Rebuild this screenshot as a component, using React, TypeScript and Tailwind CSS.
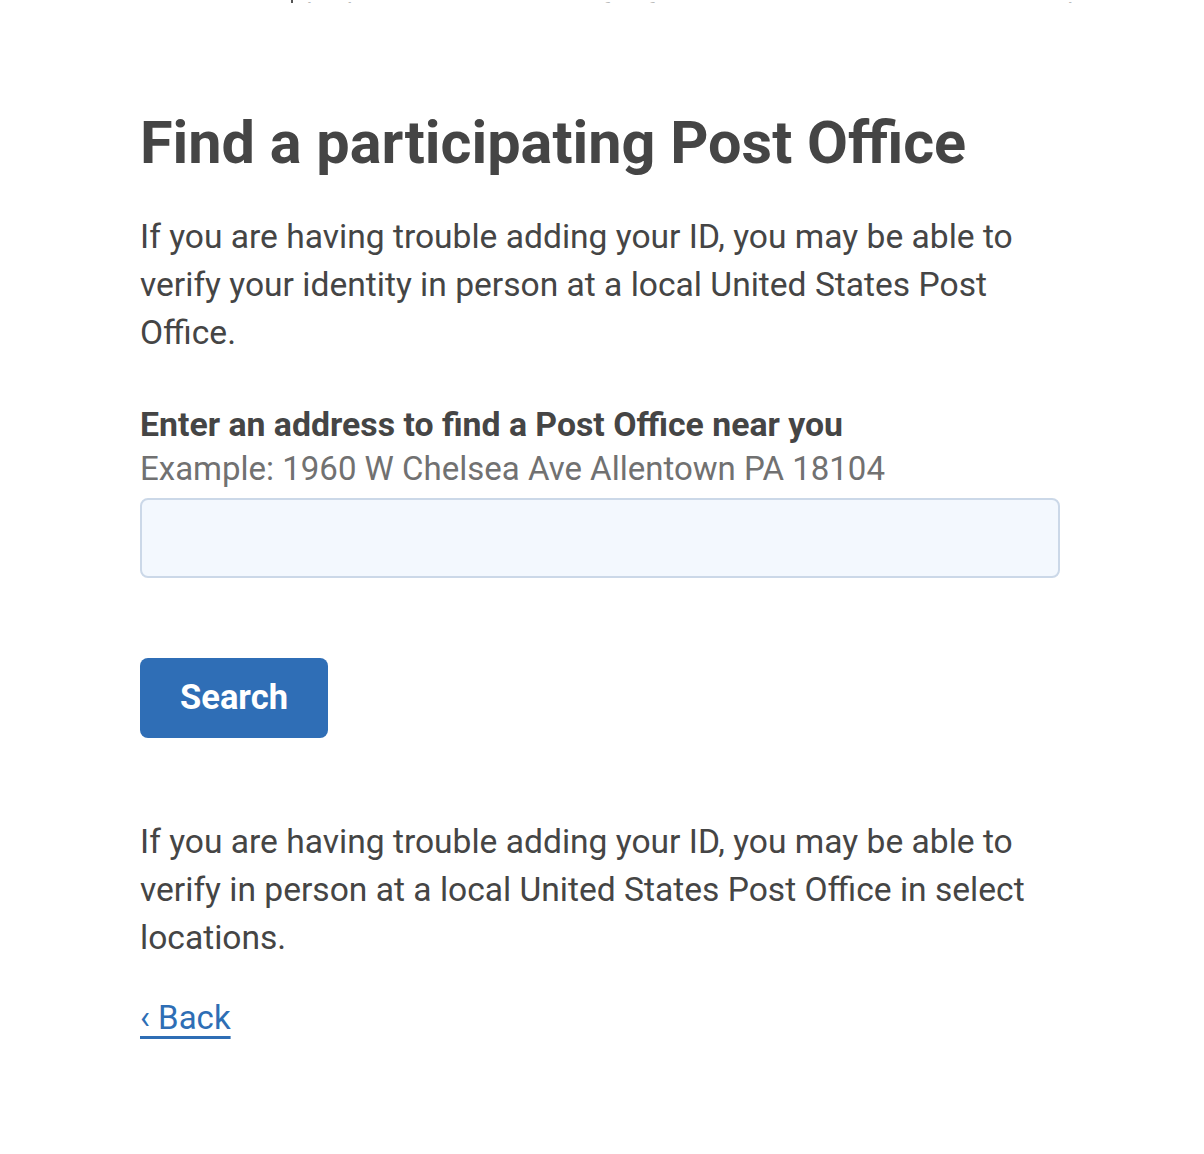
import React from "react";

export default function App() {
  const font = { fontFamily: "Roboto, 'Noto Sans', sans-serif" };
  return (
    <div className="min-h-[1154px] w-full bg-white text-[#454545]" style={font}>
      <div className="relative h-[3px] overflow-hidden">
        <div className="absolute bottom-0 left-[291px] h-[4px] w-[2px] bg-[#555]" />
        <div className="absolute bottom-0 left-[293px] text-[24px] leading-[24px] text-[#bbb] translate-y-[21px]">
          <span>pload your ID</span>
        </div>
        <div className="absolute bottom-0 left-[560px] text-[24px] leading-[24px] text-[#bbb] translate-y-[21px]">
          <span>Verify info</span>
        </div>
        <div className="absolute bottom-0 left-[780px] text-[24px] leading-[24px] text-[#bbb] translate-y-[21px]">
          <span>Secure acco</span>
        </div>
        <div className="absolute bottom-0 left-[1017px] text-[24px] leading-[24px] text-[#bbb] translate-y-[21px]">
          <span>Finish</span>
        </div>
      </div>
      <main className="mx-[140px] flex w-[920px] flex-col items-start pt-[102px]">
        <h1 className="text-[59.4px] font-bold leading-[76px] text-[#454545]">Find a participating Post Office</h1>
        <p className="mt-[32px] text-[33.6px] leading-[48px]">
          If you are having trouble adding your ID, you may be able to verify your identity in person at a local United States Post Office.
        </p>
        <label className="mt-[46px] block text-[33.8px] font-bold leading-[44px]">Enter an address to find a Post Office near you</label>
        <div className="text-[33px] leading-[44px] text-[#717171]">Example: 1960 W Chelsea Ave Allentown PA 18104</div>
        <input
          type="text"
          className="mt-[7px] block h-[80px] w-[920px] rounded-[8px] border-2 border-[#cbd8e8] bg-[#f3f8fe] outline-none"
        />
        <button className="mt-[80px] flex h-[80px] w-[188px] items-center justify-center rounded-[8px] bg-[#2f6eb6] text-[34.5px] font-bold text-white">
          Search
        </button>
        <p className="mt-[80px] text-[33.6px] leading-[48px]">
          If you are having trouble adding your ID, you may be able to verify in person at a local United States Post Office in select locations.
        </p>
        <a href="#" className="mt-[32px] inline-block text-[33px] leading-[48px] text-[#2e6eb5] underline underline-offset-[7px] decoration-[3px]">
          ‹ Back
        </a>
      </main>
    </div>
  );
}
